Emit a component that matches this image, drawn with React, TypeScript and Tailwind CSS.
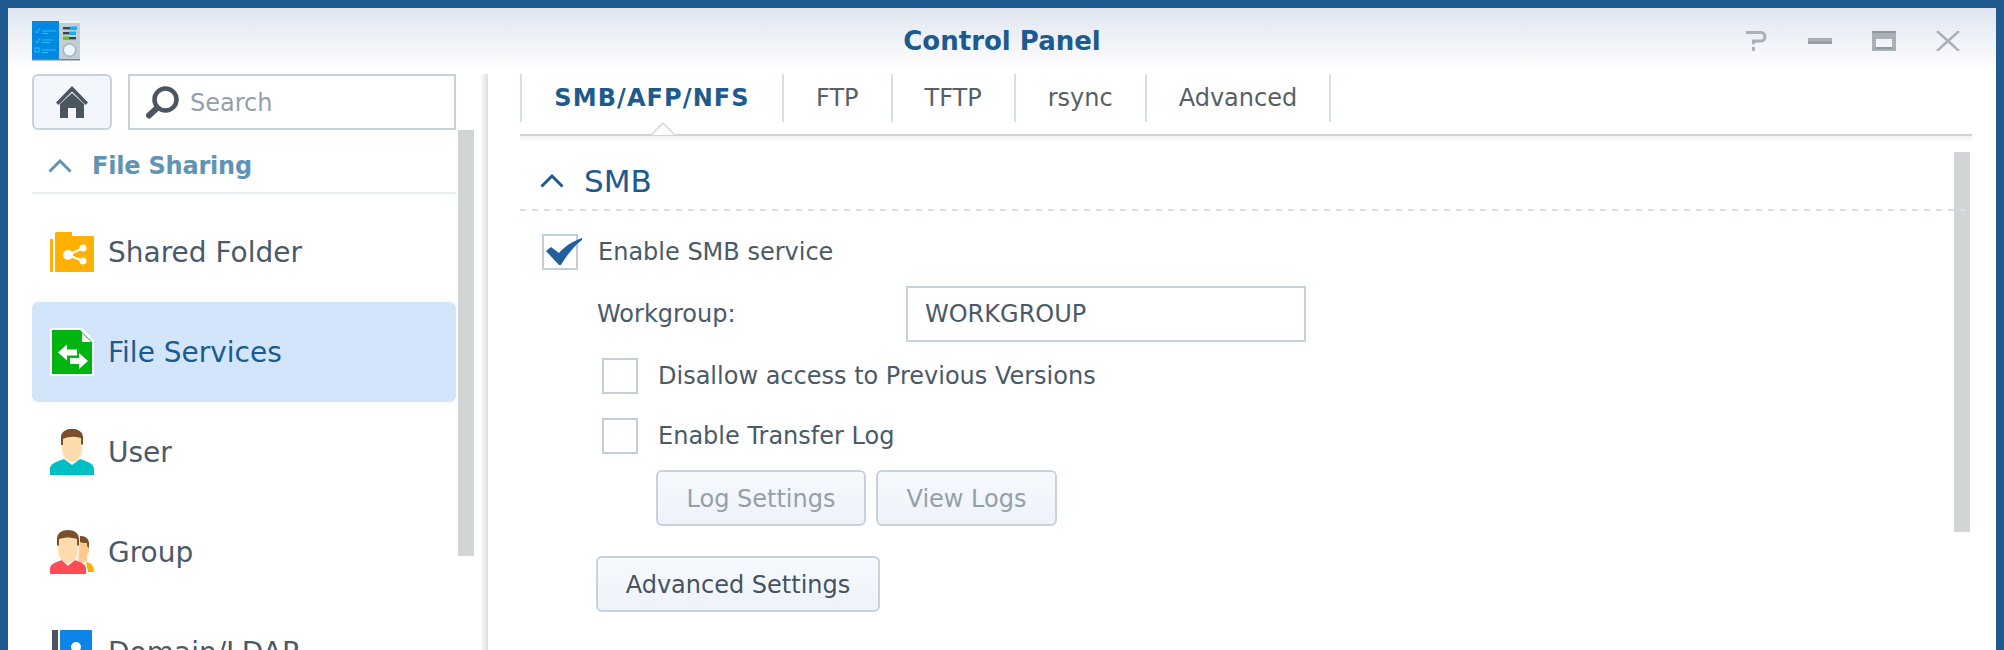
import React from 'react'

const font = { fontFamily: '"DejaVu Sans", Verdana, sans-serif' }

const AppIcon = () => (
  <svg width="48" height="40" viewBox="0 0 48 40">
    <rect x="0" y="0" width="48" height="39" rx="1" fill="#c3ced4" />
    <rect x="27" y="0" width="21" height="2" fill="#f2f5f7" />
    <rect x="0" y="0" width="27" height="39" fill="#0487e0" />
    <rect x="0" y="38" width="48" height="1.5" fill="#7b858c" />
    <g stroke="#1fc4ff" strokeWidth="1" fill="none">
      <path d="M3 10l2 2 3-5M3 20l2 2 3-5" />
      <path d="M10 10h14M10 12.5h6M10 19h11M10 21.5h8M10 29h14M10 31.5h6" />
      <rect x="3" y="27" width="4" height="4" />
    </g>
    <rect x="31" y="6" width="13" height="2.4" fill="#3b4550" />
    <rect x="38" y="5.5" width="7" height="3.4" fill="#12b1f2" />
    <rect x="31" y="11" width="13" height="2.4" fill="#3b4550" />
    <rect x="37" y="10.5" width="7" height="3.4" fill="#12b1f2" />
    <rect x="31" y="16" width="13" height="2.4" fill="#3b4550" />
    <rect x="31" y="15.5" width="6" height="3.4" fill="#5fc81e" />
    <circle cx="37.5" cy="29" r="7" fill="#a7b2b9" />
    <circle cx="37.5" cy="29" r="5.5" fill="#e8f6fd" />
  </svg>
)

const HomeIcon = () => (
  <svg width="32" height="32" viewBox="0 0 32 32" fill="#4c5661">
    <path d="M16 0L32 16.5l-2.4 2.6L16 5.5 2.4 19.1 0 16.5z" />
    <path fillRule="evenodd" d="M4 18L16 7l12 11v14H4zM12 22v10h8V22z" />
    <rect x="12" y="22" width="8" height="10" fill="#f3f7fc" />
  </svg>
)

const SearchIcon = () => (
  <svg width="33" height="33" viewBox="0 0 33 33" fill="none" stroke="#4c5661">
    <circle cx="19.5" cy="13.5" r="11" strokeWidth="4.5" />
    <path d="M11 22L3 29.5" strokeWidth="6" strokeLinecap="round" />
  </svg>
)

const FolderIcon = () => (
  <svg width="44" height="40" viewBox="0 0 44 40">
    <path d="M0 7h3v33H1a1 1 0 0 1-1-1z" fill="#ffb000" />
    <path d="M6 0h16v4h21a1 1 0 0 1 1 1v34a1 1 0 0 1-1 1H5V1a1 1 0 0 1 1-1z" fill="#ffb000" />
    <g stroke="#fff" strokeWidth="2" fill="#fff">
      <path d="M18 23L33 16M18 23l15 6" />
      <circle cx="18" cy="23" r="4" />
      <circle cx="33" cy="16" r="2.5" />
      <circle cx="33" cy="29" r="2.5" />
    </g>
  </svg>
)

const FileIcon = () => (
  <svg width="44" height="48" viewBox="0 0 44 48">
    <path d="M2 0h30l12 12v34a2 2 0 0 1-2 2H2a2 2 0 0 1-2-2V2a2 2 0 0 1 2-2z" fill="#fff" />
    <path d="M2 2h28l12 12v32H2z" fill="#00b512" />
    <path d="M32 5l9 9h-9z" fill="#fff" />
    <path d="M8 24.500l9-8v5h10v6H17v5z" fill="#fff" />
    <path d="M38 33l-9-8v5h-9v6h9v5z" fill="#fff" />
  </svg>
)

const UserIcon = () => (
  <svg width="44" height="46" viewBox="0 0 44 46">
    <path d="M0 46v-6c0-5 5-7 14-10l8 6 8-6c9 3 14 5 14 10v6z" fill="#00bfc4" />
    <path d="M14 28l8 7 8-7-2-2h-12z" fill="#fff" />
    <path d="M12 8h20v12c0 7-5 13-10 13s-10-6-10-13z" fill="#ffdcae" />
    <path d="M11 16V9c0-6 5-9 11-9s11 3 11 9v7l-2-1V7H13v8z" fill="#7a4f2c" />
    <path d="M11 16V9c0-6 5-9 11-9s11 3 11 9v1c-6-3-14-3-20 0v6z" fill="#7a4f2c" />
  </svg>
)

const GroupIcon = () => (
  <svg width="44" height="44" viewBox="0 0 44 44">
    <path d="M30 6c6 0 9 3 9 8v8l-2 3v6l-9 3z" fill="#ffc88e" />
    <path d="M30 6c6 0 9 3 9 8v4l-2-2v-3c-2 0-5 0-7-1z" fill="#7a4f2c" />
    <path d="M36 32c4 1 8 2 8 10h-6z" fill="#ffb000" />
    <path d="M0 44v-5c0-5 4-6 12-9l6 5 7-5c7 3 11 4 11 9v5z" fill="#ff4d55" />
    <path d="M11 29l7 7 8-7-2-2H13z" fill="#fff" />
    <path d="M8 8h20v12c0 7-5 13-10 13S8 27 8 20z" fill="#ffdcae" />
    <path d="M7 16V9c0-6 5-9 11-9s11 3 11 9v7l-2-1V9c-6-2-12-2-18 0v6z" fill="#7a4f2c" />
  </svg>
)

const DomainIcon = () => (
  <svg width="40" height="44" viewBox="0 0 40 44">
    <rect x="0" y="0" width="6" height="44" fill="#4c5661" />
    <rect x="8" y="0" width="32" height="44" rx="1" fill="#0b86e8" />
    <circle cx="24" cy="17" r="5" fill="#fff" />
    <path d="M15 34c0-7 4-10 9-10s9 3 9 10z" fill="#fff" />
  </svg>
)

const Chevron = ({ color }: { color: string }) => (
  <svg width="24" height="14" viewBox="0 0 24 14" fill="none" stroke={color} strokeWidth="3">
    <path d="M1.5 12.5L12 2l10.5 10.5" />
  </svg>
)

const Checkbox = ({ checked }: { checked?: boolean }) => (
  <div className="relative h-9 w-9 shrink-0 border-2 border-[#c3d0dc] bg-white">
    {checked ? (
      <svg className="absolute left-[2px] top-[2px]" width="37" height="28" viewBox="0 0 37 28">
        <path d="M0 13L5 9l8 6C19 8 27 3 36 0v2C28 8 21 17 15 27h-2z" fill="#1f5f9c" />
      </svg>
    ) : null}
  </div>
)

const Button = ({ children, className }: { children: React.ReactNode; className: string }) => (
  <div
    className={`flex h-14 items-center justify-center rounded-md border-2 border-[#c6d3df] bg-gradient-to-b from-[#f6faff] to-[#eef3f9] pt-[2px] text-[24px] ${className}`}
  >
    {children}
  </div>
)

const items = [
  { label: 'Shared Folder', icon: <FolderIcon /> },
  { label: 'File Services', icon: <FileIcon />, active: true },
  { label: 'User', icon: <UserIcon /> },
  { label: 'Group', icon: <GroupIcon /> },
  { label: 'Domain/LDAP', icon: <DomainIcon /> },
]

const tabs = ['FTP', 'TFTP', 'rsync', 'Advanced']

export default function App() {
  return (
    <div className="h-[650px] w-[2004px] overflow-hidden bg-[#1f5a90] px-2 pt-2" style={font}>
      <div className="relative flex h-[642px] flex-col overflow-hidden bg-white">
        {/* title bar */}
        <div className="absolute inset-x-0 top-0 h-[64px] bg-gradient-to-b from-[#dfe6f0] to-white" />
        <div className="relative flex h-[66px] shrink-0 items-center justify-between pl-6 pr-9">
          <div className="w-[226px]">
            <AppIcon />
          </div>
          <div className="text-[26px] font-bold text-[#1d5a8e]">Control Panel</div>
          <div className="flex w-[214px] items-center justify-between text-[#a9b0b8]">
            <svg width="22" height="20" viewBox="0 0 22 20" fill="none" stroke="currentColor" strokeWidth="3">
              <path d="M0 1.5h15c5 0 5.5 8.5 0 8.500H7.500V13M7.500 16v4" />
            </svg>
            <svg width="24" height="6" viewBox="0 0 24 6" fill="currentColor">
              <rect width="24" height="6" />
              <rect y="3.500" width="24" height="2.500" fill="#959ca4" />
            </svg>
            <svg width="24" height="20" viewBox="0 0 24 20" fill="currentColor">
              <path fillRule="evenodd" d="M0 0h24v20H0zM4 8v8h16V8z" />
              <rect width="24" height="2" fill="#8f969e" />
              <rect x="4" y="16" width="16" height="2" fill="#8f969e" />
            </svg>
            <svg width="24" height="20" viewBox="0 0 24 20" fill="none" stroke="currentColor" strokeWidth="2.500">
              <path d="M1 0l22 20M23 0L1 20" />
            </svg>
          </div>
        </div>

        <div className="relative flex min-h-0 flex-1">
          {/* sidebar */}
          <div className="relative w-[472px] shrink-0 pl-6 pr-6">
            <div className="flex gap-4">
              <div className="flex h-14 w-20 items-center justify-center rounded-md border-2 border-[#c6d3df] bg-[#f3f7fc]">
                <HomeIcon />
              </div>
              <div className="flex h-14 flex-1 items-center gap-[11px] border-2 border-[#c6d3df] bg-white pl-4 text-[24px] text-[#93a0aa]">
                <SearchIcon />
                <span className="pt-[2px]">Search</span>
              </div>
            </div>
            <div className="mb-2 flex h-[64px] items-center gap-[20px] border-b-2 border-[#e9eef2] pl-4 pt-[9px] text-[24px] font-bold tracking-[-0.2px] text-[#6193b5]">
              <Chevron color="#6193b5" />
              File Sharing
            </div>
            {items.map((item) => (
              <div
                key={item.label}
                className={`flex h-[100px] items-center rounded-md pl-[18px] text-[28px] ${
                  item.active ? 'bg-[#d3e5fa] text-[#1d5a8e]' : 'text-[#4a5a68]'
                }`}
              >
                <div className="flex w-[44px] justify-center">{item.icon}</div>
                <span className="ml-[14px] pt-[2px]">{item.label}</span>
              </div>
            ))}
            <div className="absolute left-[450px] top-[56px] h-[426px] w-4 bg-[#d1d5d6]" />
          </div>
          <div className="w-2 shrink-0 bg-gradient-to-r from-white to-[#dedede]" />

          {/* main */}
          <div className="relative min-w-0 flex-1 pl-8 pr-6">
            <div className="flex h-12 border-l-2 border-[#d3dfe9] text-[24px] text-[#565f67]">
              <div className="flex w-[262px] items-center justify-center border-r-2 border-[#d3dfe9] font-bold tracking-[1.1px] text-[#1d5a8e]">
                SMB/AFP/NFS
              </div>
              {tabs.map((tab) => (
                <div key={tab} className="flex items-center border-r-2 border-[#d3dfe9] px-8">
                  {tab}
                </div>
              ))}
            </div>
            <div className="relative mt-3 h-[2px] bg-[#d2d2d2]">
              <svg className="absolute left-[131px] top-[-12px]" width="24" height="14" viewBox="0 0 24 14">
                <path d="M0 13L12 1l12 12" fill="#fff" stroke="#d6d6d6" strokeWidth="1.500" />
              </svg>
            </div>
            <div className="h-[6px] bg-gradient-to-b from-[#f1f1f1] to-white" />

            <div className="flex h-[67px] items-center gap-[20px] pl-5 pt-[11px] text-[31px] text-[#1d5a8e]">
              <Chevron color="#1d5a8e" />
              SMB
            </div>
            <div className="relative z-10 h-[2px] bg-[repeating-linear-gradient(to_right,#d5e0ea_0,#d5e0ea_6px,transparent_6px,transparent_12px)]" />

            <div className="text-[24px] text-[#4a5a68]">
              <div className="ml-[22px] mt-[23px] flex items-center gap-5">
                <Checkbox checked />
                Enable SMB service
              </div>
              <div className="mt-4 flex items-center pl-[77px]">
                <span className="w-[309px]">Workgroup:</span>
                <div className="flex h-14 w-[400px] items-center border-2 border-[#c6d3df] pl-[17px]">WORKGROUP</div>
              </div>
              <div className="ml-[82px] mt-4 flex items-center gap-5">
                <Checkbox />
                Disallow access to Previous Versions
              </div>
              <div className="ml-[82px] mt-6 flex items-center gap-5">
                <Checkbox />
                Enable Transfer Log
              </div>
              <div className="ml-[136px] mt-4 flex gap-[10px] text-[#93a0aa]">
                <Button className="w-[210px]">Log Settings</Button>
                <Button className="w-[181px]">View Logs</Button>
              </div>
              <div className="ml-[76px] mt-[30px]">
                <Button className="w-[284px] text-[#465260]">Advanced Settings</Button>
              </div>
            </div>
            <div className="absolute left-[1466px] top-[78px] h-[380px] w-4 bg-[#d1d5d6]" />
          </div>
        </div>
      </div>
    </div>
  )
}
